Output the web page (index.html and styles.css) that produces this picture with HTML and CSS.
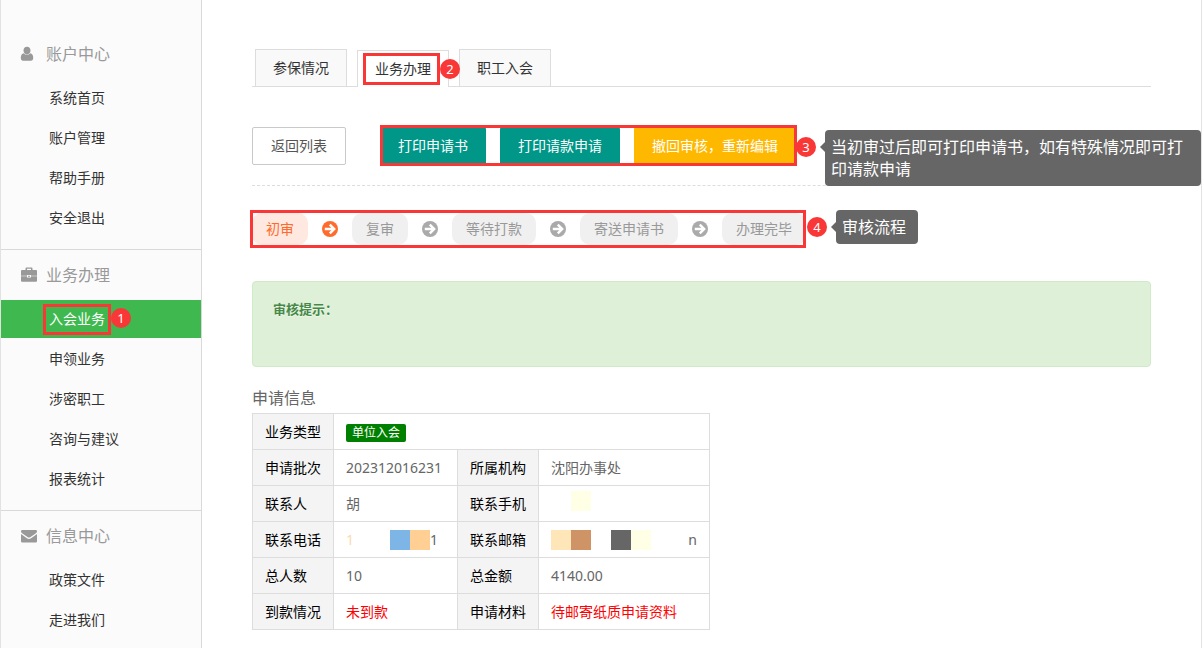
FILE: index.html
```
<!DOCTYPE html>
<html lang="zh-CN">
<head>
<meta charset="utf-8">
<title>业务办理</title>
<link rel="stylesheet" href="styles.css">
</head>
<body>
<svg class="defs" aria-hidden="true">
  <symbol id="arrow" viewBox="0 0 16 16">
    <circle cx="8" cy="8" r="8" fill="currentColor"/>
    <path d="M2.8 8H12M7.8 3.6L12.2 8L7.8 12.4" fill="none" stroke="#fff" stroke-width="2.4"/>
  </symbol>
</svg>
<div class="page">
  <nav class="sidebar">
    <section class="menu menu-first">
      <h2 class="menu-title">
        <svg class="menu-icon" viewBox="0 0 16 16"><path d="M6 .8c2.200 0 3.500 1.500 3.500 3.700S8.200 8.400 6 8.400 2.500 6.700 2.500 4.500 3.800.8 6 .8zM2.800 7.200c1.900 2.200 4.500 2.200 6.400 0 2 .3 3 2 3 4.600 0 1.800-.8 2.900-2.200 2.900H2C.6 14.700-.2 13.600-.2 11.800c0-2.600 1-4.300 3-4.600z"/></svg>
        账户中心
      </h2>
      <a class="menu-item" href="#">系统首页</a>
      <a class="menu-item" href="#">账户管理</a>
      <a class="menu-item" href="#">帮助手册</a>
      <a class="menu-item" href="#">安全退出</a>
    </section>
    <section class="menu">
      <h2 class="menu-title">
        <svg class="menu-icon" viewBox="0 0 16 16"><path fill-rule="evenodd" d="M4.500 3V1.500Q4.500.5 5.500.5h5q1 0 1 1V3H15q1 0 1 1v4.700H10V8H6v.7H0V4q0-1 1-1zM6 3h4V1.700H6zM0 9.200h6v1.300h4V9.200h6V13.800q0 1-1 1H1q-1 0-1-1zM7 8.700h2v1H7z"/></svg>
        业务办理
      </h2>
      <a class="menu-item active" href="#"><span class="marked">入会业务<span class="frame frame-menu"></span><span class="badge badge-menu">1</span></span></a>
      <a class="menu-item" href="#">申领业务</a>
      <a class="menu-item" href="#">涉密职工</a>
      <a class="menu-item" href="#">咨询与建议</a>
      <a class="menu-item" href="#">报表统计</a>
    </section>
    <section class="menu">
      <h2 class="menu-title">
        <svg class="menu-icon" viewBox="0 0 16 16"><path d="M1.200 2h13.600q1.200 0 1.200 1.200c0 1-.6 1.600-1.400 2.200L9.500 9c-1 .7-2 .7-3 0L1.400 5.400C.6 4.800 0 4.200 0 3.200Q0 2 1.200 2zM0 6l5.900 4.200c1.400 1 2.800 1 4.200 0L16 6v7.300q0 1.200-1.200 1.200H1.200Q0 14.500 0 13.300z"/></svg>
        信息中心
      </h2>
      <a class="menu-item" href="#">政策文件</a>
      <a class="menu-item" href="#">走进我们</a>
    </section>
  </nav>

  <main class="main">
    <div class="tabs">
      <a class="tab" href="#">参保情况</a>
      <a class="tab tab-active" href="#">业务办理<span class="frame frame-tab"></span><span class="badge badge-tab">2</span></a>
      <a class="tab" href="#">职工入会</a>
    </div>

    <div class="toolbar">
      <button class="btn btn-plain" type="button">返回列表</button>
      <div class="actions">
        <button class="btn btn-teal" type="button">打印申请书</button>
        <button class="btn btn-teal" type="button">打印请款申请</button>
        <button class="btn btn-amber" type="button">撤回审核，重新编辑</button>
        <span class="frame frame-actions"></span>
        <span class="badge badge-actions">3</span>
      </div>
      <div class="tip tip-actions">当初审过后即可打印申请书，如有特殊情况即可打印请款申请</div>
    </div>

    <div class="steps">
      <span class="step current">初审</span>
      <svg class="arrow current-arrow"><use href="#arrow"/></svg>
      <span class="step">复审</span>
      <svg class="arrow"><use href="#arrow"/></svg>
      <span class="step">等待打款</span>
      <svg class="arrow"><use href="#arrow"/></svg>
      <span class="step">寄送申请书</span>
      <svg class="arrow"><use href="#arrow"/></svg>
      <span class="step">办理完毕</span>
      <span class="frame frame-steps"></span>
      <span class="badge badge-steps">4</span>
      <div class="tip tip-steps">审核流程</div>
    </div>

    <div class="alert"><strong>审核提示：</strong></div>

    <table class="info">
      <caption>申请信息</caption>
      <tr><th scope="row">业务类型</th><td colspan="3"><span class="tag">单位入会</span></td></tr>
      <tr><th scope="row">申请批次</th><td class="col-a">202312016231</td><th scope="row">所属机构</th><td class="col-b">沈阳办事处</td></tr>
      <tr><th scope="row">联系人</th><td>胡</td><th scope="row">联系手机</th><td><div class="mosaic mosaic-high"><i class="gap"></i><i class="block ivory"></i></div></td></tr>
      <tr><th scope="row">联系电话</th><td><div class="mosaic"><span class="faint">1</span><i class="block blue"></i><i class="block orange"></i><span>1</span></div></td><th scope="row">联系邮箱</th><td><div class="mosaic"><i class="block cream"></i><i class="block brown"></i><i class="gap"></i><i class="block gray"></i><i class="block ivory"></i><span class="tail">n</span></div></td></tr>
      <tr><th scope="row">总人数</th><td>10</td><th scope="row">总金额</th><td>4140.00</td></tr>
      <tr><th scope="row">到款情况</th><td class="red">未到款</td><th scope="row">申请材料</th><td class="red">待邮寄纸质申请资料</td></tr>
    </table>
  </main>
</div>
</body>
</html>
```
FILE: styles.css
```
* { box-sizing: border-box; }
body {
  margin: 0;
  font: 14px/20px "Noto Sans", "Noto Sans CJK SC", sans-serif;
  color: #333;
  background: #fff;
}
a { color: inherit; text-decoration: none; }
.defs { position: absolute; width: 0; height: 0; }

.page {
  display: flex;
  min-height: 100vh;
  border: solid #e2e2e2;
  border-width: 0 1px;
}

/* Sidebar */
.sidebar {
  flex: 0 0 201px;
  background: #fbfbfb;
  border-right: 1px solid #d9d9d9;
}
.menu { padding-bottom: 10px; }
.menu + .menu { border-top: 1px solid #d9d9d9; }
.menu-first { padding-top: 29px; }
.menu-title {
  display: flex;
  align-items: center;
  gap: 9px;
  height: 50px;
  margin: 0;
  padding-left: 20px;
  font-size: 16px;
  font-weight: 400;
  color: #999;
}
.menu-icon { width: 16px; height: 16px; fill: #999; overflow: visible; }
.menu-item {
  display: block;
  margin-bottom: 2px;
  padding-left: 48px;
  line-height: 38px;
}
.menu-item.active { background: #3fb94f; color: #fff; }
.marked { position: relative; display: inline-block; }

/* Annotations */
.frame { position: absolute; border: 3px solid #f93737; pointer-events: none; }
.badge {
  position: absolute;
  width: 20px;
  border-radius: 50%;
  background: #f93737;
  color: #fff;
  font-size: 13px;
  line-height: 20px;
  text-align: center;
}
.frame-menu { inset: 4px -6px 3px; }
.badge-menu { left: 62px; top: 8px; }
.frame-tab { inset: 2px 8px 2px 5px; }
.badge-tab { left: 82px; top: 8px; }
.frame-actions { inset: -2px -1px -1px 0; }
.badge-actions { left: 100%; top: 10px; }
.frame-steps { inset: -3px 0 -3px -2px; }
.badge-steps { left: 100%; top: 4px; margin-left: 1px; }
.tip {
  position: absolute;
  padding: 6px;
  border-radius: 4px;
  background: #666;
  color: #fff;
  font-size: 16px;
  line-height: 22px;
}
.tip::before {
  content: "";
  position: absolute;
  right: 100%;
  border: solid transparent;
  border-width: 5px 5px 5px 0;
  border-right-color: #666;
}
.tip-actions { left: 573px; right: -50px; top: 3px; }
.tip-actions::before { top: 12px; }
.tip-steps { left: 100%; top: -3px; margin-left: 30px; width: 82px; }
.tip-steps::before { top: 12px; }

/* Content */
.main { flex: 1; min-width: 0; padding: 49px 50px 18px; }
.tabs {
  display: flex;
  gap: 10px;
  height: 38px;
  padding-left: 3px;
  border-bottom: 1px solid #ddd;
}
.tab {
  height: 37px;
  padding: 0 17px;
  border: 1px solid #ddd;
  border-bottom: 0;
  background: #f9f9f9;
  line-height: 36px;
}
.tab-active {
  position: relative;
  margin-top: 1px;
  background: #fff;
}
.toolbar {
  position: relative;
  display: flex;
  gap: 34px;
  margin-top: 40px;
  padding-bottom: 20px;
  border-bottom: 1px dashed #ddd;
}
.actions { position: relative; display: flex; gap: 14px; }
.btn {
  height: 38px;
  padding: 0 18px;
  border: 0;
  border-radius: 2px;
  font: inherit;
  color: #fff;
  white-space: nowrap;
}
.btn-plain { border: 1px solid #c9c9c9; background: #fff; color: #555; }
.btn-teal { background: #009688; }
.btn-amber { background: #ffb800; }

.steps {
  position: relative;
  display: flex;
  align-items: center;
  gap: 14px;
  width: max-content;
  margin-top: 27px;
}
.step {
  padding: 0 14px;
  border-radius: 10px;
  background: #f0f0f0;
  color: #999;
  line-height: 32px;
}
.step.current { background: #ffe8e0; color: #ff6b2c; }
.arrow { width: 16px; height: 16px; color: #aaa; }
.current-arrow { color: #ff6b2c; }

.alert {
  min-height: 86px;
  margin-top: 36px;
  padding: 17px 20px;
  border: 1px solid #d0e9c6;
  border-radius: 4px;
  background: #dff0d8;
  color: #468847;
  font-size: 13px;
  text-shadow: 0 1px 0 rgba(255, 255, 255, .5);
}

.info { margin-top: 20px; border-collapse: collapse; color: #666; }
.info caption {
  padding-bottom: 4px;
  font-size: 16px;
  line-height: 22px;
  text-align: left;
}
.info th, .info td {
  height: 36px;
  padding: 0 12px;
  border: 1px solid #ddd;
  text-align: left;
}
.info th { background: #f4f4f4; color: #000; font-weight: 400; }
.info .col-a { width: 124px; }
.info .col-b { width: 171px; }
.info .red { color: #f00; }
.tag {
  display: inline-block;
  padding: 0 6px;
  border-radius: 2px;
  background: #008000;
  color: #fff;
  font-size: 12px;
  line-height: 18px;
  vertical-align: middle;
}
.mosaic { display: flex; height: 20px; }
.mosaic-high { height: 26px; }
.block { width: 20px; height: 20px; }
.gap { width: 20px; }
.faint { width: 44px; color: #fbdcae; }
.tail { margin-left: auto; }
.ivory { background: #ffffe6; }
.blue { background: #7cb5e6; }
.orange { background: #ffcf94; }
.cream { background: #ffe6b8; }
.brown { background: #cf9466; }
.gray { background: #666; }
```
